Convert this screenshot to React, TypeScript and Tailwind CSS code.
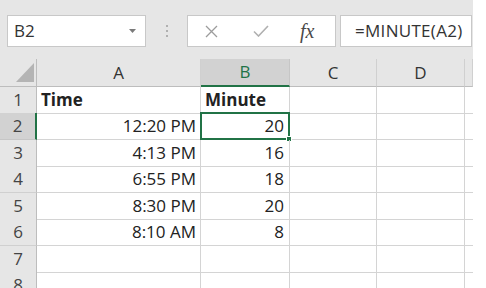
import React from "react";

const rows: { n: number; time: string; min: string; h: string }[] = [
  { n: 1, time: "Time", min: "Minute", h: "h-[26px]" },
  { n: 2, time: "12:20 PM", min: "20", h: "h-[27px]" },
  { n: 3, time: "4:13 PM", min: "16", h: "h-[26px]" },
  { n: 4, time: "6:55 PM", min: "18", h: "h-[27px]" },
  { n: 5, time: "8:30 PM", min: "20", h: "h-[26px]" },
  { n: 6, time: "8:10 AM", min: "8", h: "h-[27px]" },
  { n: 7, time: "", min: "", h: "h-[26px]" },
  { n: 8, time: "", min: "", h: "h-[27px]" },
];

const gridCols = "grid shrink-0 grid-cols-[37px_164px_89px_87px_88px_8px]";

function FormulaBar() {
  return (
    <div className="h-[59px] shrink-0 bg-[#e6e6e6] flex items-start pt-[15px] pl-[7px] pr-[1px]">
      <div className="w-[139px] h-[32px] bg-white border border-[#c8c8c8] flex items-center justify-between pl-[6px] pr-[9px]">
        <span className="text-[17px] text-[#333]">B2</span>
        <svg width="7" height="4" viewBox="0 0 7 4">
          <polygon points="0,0 7,0 3.5,4" fill="#7a7a7a" />
        </svg>
      </div>
      <div className="w-[41px] h-[32px] flex flex-col items-center justify-center gap-[3px]">
        <span className="w-[2px] h-[2px] bg-[#b0b0b0]" />
        <span className="w-[2px] h-[2px] bg-[#b0b0b0]" />
        <span className="w-[2px] h-[2px] bg-[#b0b0b0]" />
      </div>
      <div className="w-[149px] h-[32px] bg-white border border-[#c8c8c8] flex items-center">
        <svg width="13" height="13" viewBox="0 0 13 13" className="ml-[17px]">
          <path d="M1 1 L12 12 M12 1 L1 12" stroke="#9c9c9c" strokeWidth="1.3" fill="none" />
        </svg>
        <svg width="16" height="12" viewBox="0 0 16 12" className="ml-[35px]">
          <path d="M1 6.5 L5.5 11 L15 1" stroke="#b0b0b0" strokeWidth="1.6" fill="none" />
        </svg>
        <span className="ml-[31px] text-[20px] italic text-[#4a4a4a] font-['Liberation_Serif',serif] leading-none">
          fx
        </span>
      </div>
      <div className="ml-[4px] flex-1 h-[32px] bg-white border border-[#c8c8c8] flex items-center pl-[14px]">
        <span className="text-[17px] text-[#333] tracking-[0.3px]">=MINUTE(A2)</span>
      </div>
    </div>
  );
}

function HeaderRow() {
  const cols = ["A", "B", "C", "D", ""];
  return (
    <div className={`${gridCols} h-[28px] bg-[#e6e6e6]`}>
      <div className="border-r border-b border-[#bdbdbd] flex items-end justify-end pr-[2px] pb-[4px]">
        <svg width="18" height="19" viewBox="0 0 18 19">
          <polygon points="18,0 18,19 0,19" fill="#b4b4b4" />
        </svg>
      </div>
      {cols.map((c) =>
        c === "B" ? (
          <div
            key={c}
            className="bg-[#d2d2d2] border-r border-[#c6c6c6] border-b-2 border-b-[#217346] flex items-center justify-center text-[17px] text-[#217346]"
          >
            {c}
          </div>
        ) : (
          <div
            key={c + "x"}
            className="border-r border-b border-r-[#d0d0d0] border-b-[#bdbdbd] flex items-center justify-center text-[17px] text-[#333]"
          >
            {c}
          </div>
        )
      )}
    </div>
  );
}

function DataRow({ r }: { r: (typeof rows)[number] }) {
  const selected = r.n === 2;
  const bold = r.n === 1;
  return (
    <div className={`${gridCols} ${r.h}`}>
      <div
        className={
          selected
            ? "bg-[#d2d2d2] border-r-2 border-r-[#217346] border-b border-b-[#c6c6c6] flex items-center justify-center text-[17px] text-[#444]"
            : "bg-[#e6e6e6] border-r border-b border-r-[#bdbdbd] border-b-[#d0d0d0] flex items-center justify-center text-[17px] text-[#444]"
        }
      >
        {r.n}
      </div>
      <div
        className={`border-r border-b border-[#d4d4d4] flex items-center text-[17px] text-[#222] ${
          bold ? "font-bold justify-start pl-[4px]" : "justify-end pr-[4px]"
        }`}
      >
        {r.time}
      </div>
      <div
        className={`relative border-r border-b border-[#d4d4d4] flex items-center text-[17px] text-[#222] ${
          bold ? "font-bold justify-start pl-[4px]" : "justify-end pr-[5px]"
        }`}
      >
        {r.min}
        {selected && (
          <>
            <div className="absolute left-[-1px] top-[-1px] right-[-1px] bottom-[-1px] border-2 border-[#217346]" />
            <div className="absolute right-[-3px] bottom-[-3px] w-[6px] h-[6px] bg-[#217346] border border-white" />
          </>
        )}
      </div>
      <div className="border-r border-b border-[#d4d4d4]" />
      <div className="border-r border-b border-[#d4d4d4]" />
      <div className="border-b border-[#d4d4d4]" />
    </div>
  );
}

export default function App() {
  return (
    <div className="w-[486px] h-[288px] bg-white overflow-hidden flex items-start font-['Open_Sans',sans-serif]">
      <div className="w-[473px] flex flex-col">
        <FormulaBar />
        <HeaderRow />
        {rows.map((r) => (
          <DataRow key={r.n} r={r} />
        ))}
      </div>
    </div>
  );
}
